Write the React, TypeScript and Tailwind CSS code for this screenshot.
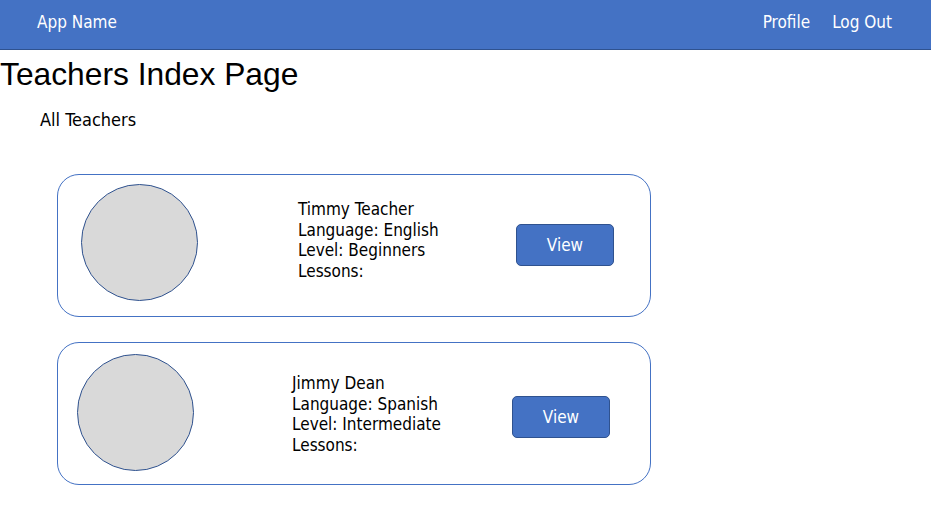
import * as React from 'react'

interface Teacher {
  name: string
  language: string
  level: string
  // the mockup nudges the second card's contents a few pixels; keep that per row
  layout: {
    pad: string
    avatar: string
    info: string
    button: string
  }
}

const TEACHERS: Teacher[] = [
  {
    name: 'Timmy Teacher',
    language: 'English',
    level: 'Beginners',
    layout: {
      pad: 'pl-[23px]',
      avatar: 'mt-[9px]',
      info: 'ml-[100px] mt-[24px] w-[218px]',
      button: 'mt-[49px]',
    },
  },
  {
    name: 'Jimmy Dean',
    language: 'Spanish',
    level: 'Intermediate',
    layout: {
      pad: 'pl-[19px]',
      avatar: 'mt-[11px]',
      info: 'ml-[98px] mt-[30px] w-[220px]',
      button: 'mt-[53px]',
    },
  },
]

const body = { fontFamily: '"DejaVu Sans Condensed", "DejaVu Sans", sans-serif' }

function TeacherCard({ teacher }: { teacher: Teacher }) {
  const { layout } = teacher
  return (
    <li
      className={`flex h-[143px] w-[594px] items-start rounded-[22px] border border-[#4472c4] bg-white ${layout.pad}`}
    >
      <div
        className={`h-[117px] w-[117px] shrink-0 rounded-full border border-[#2f528f] bg-[#d9d9d9] ${layout.avatar}`}
      />

      <div className={`shrink-0 text-[17px] leading-[20.5px] text-black ${layout.info}`}>
        <p>{teacher.name}</p>
        <p>Language: {teacher.language}</p>
        <p>Level: {teacher.level}</p>
        <p>Lessons:</p>
      </div>

      <button
        type="button"
        className={`h-[42px] w-[98px] shrink-0 rounded-[5px] border border-[#2f528f] bg-[#4472c4] pt-[2px] text-[17px] text-white ${layout.button}`}
      >
        View
      </button>
    </li>
  )
}

export default function App() {
  return (
    <div className="min-h-[519px] bg-white" style={body}>
      <header className="flex h-[50px] items-start justify-between border-b border-[#2f528f] bg-[#4472c4] pl-[37px] pr-[39px] pt-[10px] text-[17px] text-white">
        <span>App Name</span>
        <nav className="flex gap-[22px]">
          <a href="#">Profile</a>
          <a href="#">Log Out</a>
        </nav>
      </header>

      <h1
        className="mt-[6px] text-[31.75px] leading-[36px] text-black"
        style={{ fontFamily: '"Liberation Sans", Arial, sans-serif' }}
      >
        Teachers Index Page
      </h1>

      <h2 className="ml-[40px] mt-[17px] text-[18px] leading-[22px] text-black">All Teachers</h2>

      <ul className="ml-[57px] mt-[43px] flex flex-col gap-[25px]">
        {TEACHERS.map((teacher) => (
          <TeacherCard key={teacher.name} teacher={teacher} />
        ))}
      </ul>
    </div>
  )
}
